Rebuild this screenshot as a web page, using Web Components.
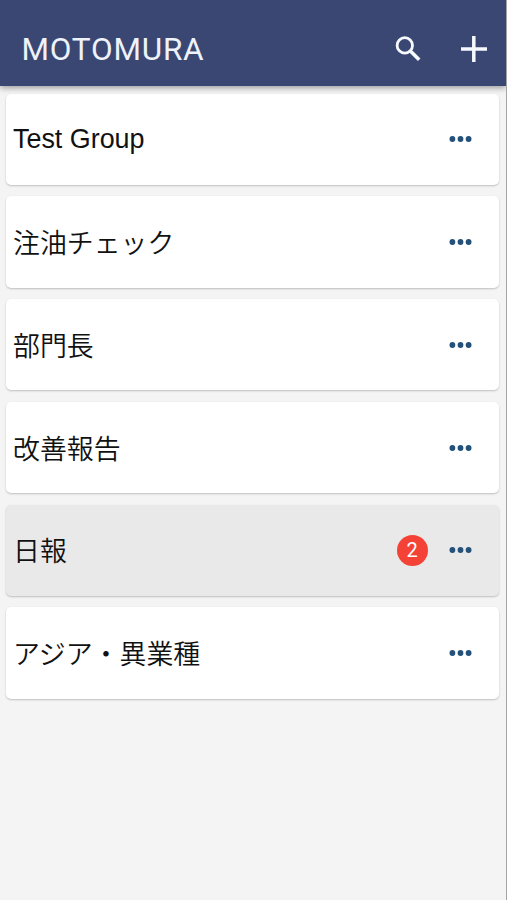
<!DOCTYPE html>
<html lang="ja">
<head>
<meta charset="utf-8">
<title>MOTOMURA</title>
<style>
body { margin: 0; background: #f4f4f4; }
</style>
</head>
<body>
<group-app></group-app>
<script>
class AppBar extends HTMLElement {
  constructor() {
    super();
    this.attachShadow({ mode: 'open' }).innerHTML = `
      <style>
        :host { display: flex; box-sizing: border-box; height: 86px; padding: 13px 16.5px 0 21.4px; align-items: center;
          background: #3b4773; color: #f6faff; position: relative; z-index: 1;
          box-shadow: 0 2px 6px rgba(0,0,0,.36); font: 400 31.5px/36px Roboto, sans-serif; letter-spacing: .8px; }
        .title { flex: 1; white-space: nowrap; color: #edf2fb; }
        svg { display: block; flex: none; }
        .search { margin-right: 33.5px; }
      </style>
      <span class="title"><slot></slot></span>
      <svg class="search" width="32" height="32" viewBox="0 0 32 32" fill="none" stroke="currentColor" stroke-width="2.8"><circle cx="12.8" cy="11.4" r="7.7"/><path d="M18.1 16.7 L27.2 25.8" stroke-width="3.6"/></svg>
      <svg width="32" height="32" viewBox="0 0 32 32" fill="none" stroke="currentColor" stroke-width="3.5"><path d="M3 15H29M15.8 2.1V27.9"/></svg>`;
  }
}
customElements.define('app-bar', AppBar);

class CountBadge extends HTMLElement {
  constructor() {
    super();
    this.attachShadow({ mode: 'open' }).innerHTML = `
      <style>
        :host { display: flex; width: 31px; height: 31px; border-radius: 50%; align-items: center; justify-content: center;
          background: #f44336; color: #fff; font: 20px/31px Roboto, sans-serif; }
      </style>
      <slot></slot>`;
  }
}
customElements.define('count-badge', CountBadge);

class GroupCard extends HTMLElement {
  constructor() {
    super();
    this.attachShadow({ mode: 'open' }).innerHTML = `
      <style>
        :host { display: flex; box-sizing: border-box; height: 91.3px; padding: 0 27.3px 0 7px; align-items: center;
          border-radius: 5px; background: #fff; color: #111;
          box-shadow: 0 1px 2px rgba(0,0,0,.22);
          font: 26.9px/40px "Liberation Sans", "Noto Sans CJK JP", sans-serif; }
        :host([selected]) { background: #e9e9e9; }
        .name { flex: 1; white-space: nowrap; }
        :host(:lang(ja)) .name { font-weight: 350; padding-top: 4px; }
        svg { display: block; flex: none; margin-left: 21px; }
      </style>
      <span class="name"><slot></slot></span>
      <slot name="badge"></slot>
      <svg width="23" height="8" viewBox="0 0 23 8" fill="#24517a"><circle cx="3.4" cy="4" r="2.9"/><circle cx="11.5" cy="4" r="2.9"/><circle cx="19.6" cy="4" r="2.9"/></svg>`;
  }
}
customElements.define('group-card', GroupCard);

class GroupApp extends HTMLElement {
  constructor() {
    super();
    this.attachShadow({ mode: 'open' }).innerHTML = `
      <style>
        :host { display: flex; flex-direction: column; box-sizing: border-box; height: 900px; overflow: hidden; background: #f4f4f4; border-right: 1px solid #a5a5a7; }
        main { display: flex; flex-direction: column; gap: 11.5px; padding: 7.5px 7px 0 6px; }
      </style>
      <app-bar>MOTOMURA</app-bar>
      <main>
        <group-card lang="en">Test Group</group-card>
        <group-card>注油チェック</group-card>
        <group-card>部門長</group-card>
        <group-card>改善報告</group-card>
        <group-card selected>日報<count-badge slot="badge">2</count-badge></group-card>
        <group-card>アジア・異業種</group-card>
      </main>`;
  }
}
customElements.define('group-app', GroupApp);
</script>
</body>
</html>
